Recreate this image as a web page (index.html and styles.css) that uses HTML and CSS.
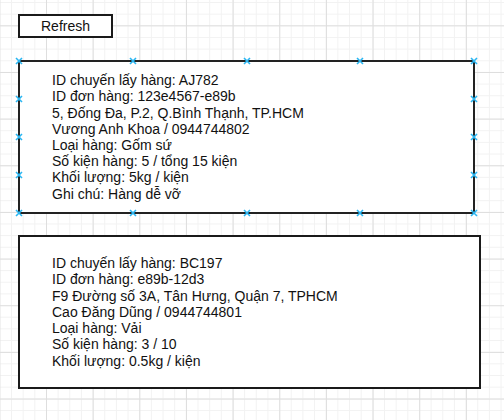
FILE: index.html
```html
<!DOCTYPE html>
<html lang="vi">
<head>
<meta charset="utf-8">
<title>Pickup list</title>
<link rel="stylesheet" href="styles.css">
</head>
<body>
<main class="canvas">
  <button class="refresh" type="button">Refresh</button>
  <section class="card card-selected">
    <div class="lines">
      <div>ID chuyến lấy hàng: AJ782</div>
      <div>ID đơn hàng: 123e4567-e89b</div>
      <div>5, Đống Đa, P.2, Q.Bình Thạnh, TP.HCM</div>
      <div>Vương Anh Khoa / 0944744802</div>
      <div>Loại hàng: Gốm sứ</div>
      <div>Số kiện hàng: 5 / tổng 15 kiện</div>
      <div>Khối lượng: 5kg / kiện</div>
      <div>Ghi chú: Hàng dễ vỡ</div>
    </div>
    <div class="handles" aria-hidden="true">
      <svg class="h" style="left:0%;top:0%" viewBox="0 0 8 8"><path d="M1 1L7 7M7 1L1 7"/></svg>
      <svg class="h" style="left:25%;top:0%" viewBox="0 0 8 8"><path d="M1 1L7 7M7 1L1 7"/></svg>
      <svg class="h" style="left:50%;top:0%" viewBox="0 0 8 8"><path d="M1 1L7 7M7 1L1 7"/></svg>
      <svg class="h" style="left:75%;top:0%" viewBox="0 0 8 8"><path d="M1 1L7 7M7 1L1 7"/></svg>
      <svg class="h" style="left:100%;top:0%" viewBox="0 0 8 8"><path d="M1 1L7 7M7 1L1 7"/></svg>
      <svg class="h" style="left:0%;top:25%" viewBox="0 0 8 8"><path d="M1 1L7 7M7 1L1 7"/></svg>
      <svg class="h" style="left:0%;top:50%" viewBox="0 0 8 8"><path d="M1 1L7 7M7 1L1 7"/></svg>
      <svg class="h" style="left:0%;top:75%" viewBox="0 0 8 8"><path d="M1 1L7 7M7 1L1 7"/></svg>
      <svg class="h" style="left:100%;top:25%" viewBox="0 0 8 8"><path d="M1 1L7 7M7 1L1 7"/></svg>
      <svg class="h" style="left:100%;top:50%" viewBox="0 0 8 8"><path d="M1 1L7 7M7 1L1 7"/></svg>
      <svg class="h" style="left:100%;top:75%" viewBox="0 0 8 8"><path d="M1 1L7 7M7 1L1 7"/></svg>
      <svg class="h" style="left:0%;top:100%" viewBox="0 0 8 8"><path d="M1 1L7 7M7 1L1 7"/></svg>
      <svg class="h" style="left:25%;top:100%" viewBox="0 0 8 8"><path d="M1 1L7 7M7 1L1 7"/></svg>
      <svg class="h" style="left:50%;top:100%" viewBox="0 0 8 8"><path d="M1 1L7 7M7 1L1 7"/></svg>
      <svg class="h" style="left:75%;top:100%" viewBox="0 0 8 8"><path d="M1 1L7 7M7 1L1 7"/></svg>
      <svg class="h" style="left:100%;top:100%" viewBox="0 0 8 8"><path d="M1 1L7 7M7 1L1 7"/></svg>
    </div>
  </section>
  <section class="card card-wide">
    <div class="lines">
      <div>ID chuyến lấy hàng: BC197</div>
      <div>ID đơn hàng: e89b-12d3</div>
      <div>F9 Đường số 3A, Tân Hưng, Quận 7, TPHCM</div>
      <div>Cao Đăng Dũng / 0944744801</div>
      <div>Loại hàng: Vải</div>
      <div>Số kiện hàng: 3 / 10</div>
      <div>Khối lượng: 0.5kg / kiện</div>
    </div>
  </section>
</main>
</body>
</html>
```

FILE: styles.css
```css
html, body {
  margin: 0;
  padding: 0;
}

body {
  width: 504px;
  height: 420px;
  overflow: hidden;
  background-color: #ffffff;
  background-image:
    linear-gradient(to right, #dedede 1px, transparent 1px),
    linear-gradient(to bottom, #dedede 1px, transparent 1px),
    linear-gradient(to right, #f2f2f2 1px, transparent 1px),
    linear-gradient(to bottom, #f2f2f2 1px, transparent 1px);
  background-size:
    46.667px 46.667px,
    46.667px 46.667px,
    11.667px 11.667px,
    11.667px 11.667px;
  background-position:
    46px 25.333px,
    46px 25.333px,
    11px 2px,
    11px 2px;
  font-family: "Liberation Sans", Arial, sans-serif;
  color: #111;
}

.canvas {
  display: flex;
  flex-direction: column;
  align-items: flex-start;
  padding: 14px 0 0 18px;
}

.refresh {
  box-sizing: border-box;
  width: 95px;
  height: 24px;
  margin: 0;
  padding: 0;
  border: 2px solid #1a1a1a;
  background: #ffffff;
  font-family: "Liberation Sans", Arial, sans-serif;
  font-size: 14px;
  color: #111;
  line-height: 20px;
}

.card {
  position: relative;
  box-sizing: border-box;
  height: 154px;
  border: 2px solid #1a1a1a;
  background: #ffffff;
  display: flex;
  align-items: center;
  padding-left: 32px;
}

.card-selected {
  width: 457px;
  margin-top: 22px;
  border-color: #222;
}

.card-wide {
  width: 463px;
  margin-top: 21px;
}

.lines {
  font-size: 14px;
  line-height: 16.2px;
  white-space: nowrap;
}

.handles {
  position: absolute;
  left: -1px;
  top: -1px;
  right: -1px;
  bottom: -1px;
  pointer-events: none;
}

.h {
  position: absolute;
  width: 8px;
  height: 8px;
  margin: -4px 0 0 -4px;
  overflow: visible;
}

.h path {
  fill: none;
  stroke: #29b6f2;
  stroke-width: 1.6;
}
```
